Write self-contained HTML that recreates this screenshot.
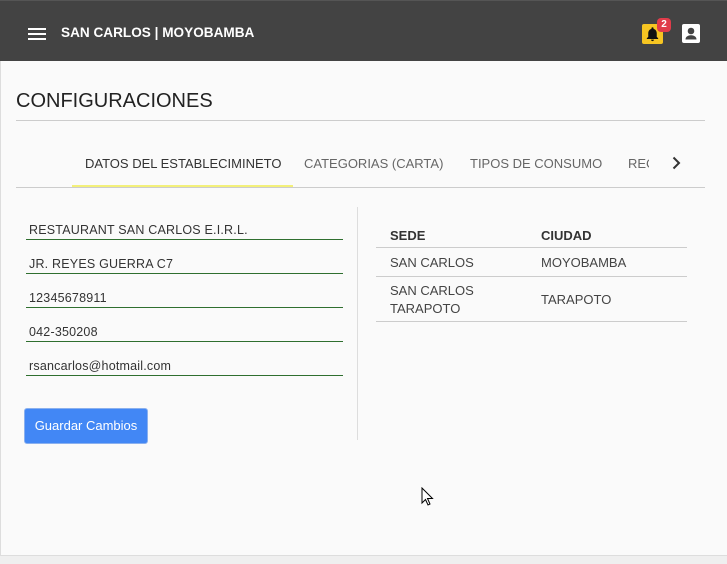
<!DOCTYPE html>
<html><head><meta charset="utf-8"><style>
*{margin:0;padding:0;box-sizing:border-box}
body{width:727px;height:564px;background:#efefef;font-family:"Liberation Sans",sans-serif;position:relative;overflow:hidden;color:#333}
.page{position:absolute;left:0;top:0;width:727px;height:556px;background:#fafafa;border-left:1px solid #ddd;border-bottom:1px solid #ddd}
.hdr{position:absolute;left:0;top:0;width:727px;height:61px;background:#434343;border-top:1px solid #555}
.hb{position:absolute;left:28px;height:2px;width:18px;background:#fff}
.t{position:absolute;white-space:nowrap}
.in{position:absolute;left:26px;width:317px;border-bottom:1px solid #2f6f2f;height:20px;font-size:12.5px;color:#333;padding-left:3px;padding-top:3px;letter-spacing:.2px}
.hr{position:absolute;height:1px;background:#ccc}
</style></head><body>
<div class="page"></div>
<div class="hdr">
<div class="hb" style="top:27px"></div><div class="hb" style="top:32px"></div><div class="hb" style="top:37px"></div>
<div class="t" style="left:61px;top:24px;color:#fff;font-size:13.6px;font-weight:bold">SAN CARLOS | MOYOBAMBA</div>
<div style="position:absolute;left:642px;top:23px;width:21px;height:20px;background:#f6c522;border-radius:2px"></div>
<svg style="position:absolute;left:644px;top:24px" width="17" height="18" viewBox="0 0 24 24"><path d="M12 22a2 2 0 0 0 2-2h-4a2 2 0 0 0 2 2zm6-6v-5c0-3.1-1.6-5.6-4.5-6.3V4a1.5 1.5 0 0 0-3 0v.7C7.6 5.4 6 7.9 6 11v5l-2 2v1h16v-1z" fill="#111"/></svg>
<div style="position:absolute;left:657px;top:17px;width:14px;height:14px;background:#e03c4a;border-radius:4px;color:#fff;font-size:10px;font-weight:bold;text-align:center;line-height:14px">2</div>
<div style="position:absolute;left:682px;top:23px;width:18px;height:19px;background:#fff;border-radius:2px"></div>
<svg style="position:absolute;left:682px;top:23px" width="18" height="19" viewBox="0 0 18 19"><circle cx="9" cy="7" r="3.3" fill="#434343"/><path d="M3.5 15.5c0-3 3-4.2 5.5-4.2s5.5 1.2 5.5 4.2z" fill="#434343"/></svg>
</div>
<div class="t" style="left:16px;top:90px;font-size:20px;color:#222">CONFIGURACIONES</div>
<div class="hr" style="left:16px;top:120px;width:689px"></div>
<div class="t" style="left:85px;top:156px;font-size:13px;color:#333">DATOS DEL ESTABLECIMINETO</div>
<div class="t" style="left:304px;top:156px;font-size:13px;color:#666">CATEGORIAS (CARTA)</div>
<div class="t" style="left:470px;top:156px;font-size:13px;color:#666">TIPOS DE CONSUMO</div>
<div class="t" style="left:628px;top:156px;font-size:13px;color:#666;width:21px;overflow:hidden">RECETAS</div>
<svg style="position:absolute;left:670px;top:155px" width="12" height="16" viewBox="0 0 12 16"><path d="M3.5 2.5l5.5 5.5-5.5 5.5" stroke="#333" stroke-width="2" fill="none"/></svg>
<div style="position:absolute;left:72px;top:185px;width:221px;height:2px;background:#f3f07a"></div>
<div class="hr" style="left:16px;top:187px;width:689px"></div>
<div class="in" style="top:220px">RESTAURANT SAN CARLOS E.I.R.L.</div>
<div class="in" style="top:254px">JR. REYES GUERRA C7</div>
<div class="in" style="top:288px">12345678911</div>
<div class="in" style="top:322px">042-350208</div>
<div class="in" style="top:356px">rsancarlos@hotmail.com</div>
<div style="position:absolute;left:24px;top:408px;width:124px;height:36px;background:#4287f5;border:1px solid #8ab0ee;border-radius:3px;color:#fff;font-size:13px;text-align:center;line-height:34px">Guardar Cambios</div>
<div style="position:absolute;left:357px;top:207px;width:1px;height:233px;background:#ddd"></div>
<div class="t" style="left:390px;top:228px;font-size:13px;font-weight:bold;color:#333">SEDE</div>
<div class="t" style="left:541px;top:228px;font-size:13px;font-weight:bold;color:#333">CIUDAD</div>
<div class="hr" style="left:376px;top:247px;width:311px"></div>
<div class="t" style="left:390px;top:255px;font-size:13px;color:#444">SAN CARLOS</div>
<div class="t" style="left:541px;top:255px;font-size:13px;color:#444">MOYOBAMBA</div>
<div class="hr" style="left:376px;top:276px;width:311px"></div>
<div class="t" style="left:390px;top:282px;font-size:13px;color:#444;line-height:18px">SAN CARLOS<br>TARAPOTO</div>
<div class="t" style="left:541px;top:292px;font-size:13px;color:#444">TARAPOTO</div>
<div class="hr" style="left:376px;top:321px;width:311px"></div>
<svg style="position:absolute;left:421px;top:487px" width="13" height="20" viewBox="0 0 13 20"><path d="M1 1v15l3.5-3.5 2.5 5.5 2-1-2.5-5.5h5z" fill="#fff" stroke="#000" stroke-width="1"/></svg>
</body></html>
